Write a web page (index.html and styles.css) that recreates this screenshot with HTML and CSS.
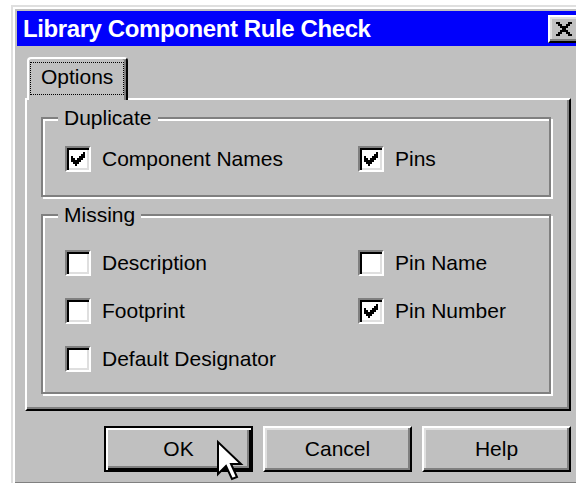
FILE: index.html
```html
<!DOCTYPE html>
<html lang="en">
<head>
<meta charset="utf-8">
<title>Library Component Rule Check</title>
<link rel="stylesheet" href="styles.css">
</head>
<body>
<div class="window">
  <div class="titlebar">
    <span class="title">Library Component Rule Check</span>
    <span class="close-btn" aria-label="Close">
      <svg width="16" height="14" viewBox="0 0 8 7" shape-rendering="crispEdges">
        <path d="M0 0h2v1h1v1h2v-1h1v-1h2v1h-1v1h-1v1h-1v1h1v1h1v1h1v1h-2v-1h-1v-1h-2v1h-1v1h-2v-1h1v-1h1v-1h1v-1h-1v-1h-1v-1h-1z" fill="#000"/>
      </svg>
    </span>
  </div>

  <div class="content">
    <div class="tabs">
      <div class="tab is-active"><span class="tab-focus">Options</span></div>
    </div>

    <div class="panel">
      <fieldset class="group">
        <legend>Duplicate</legend>
        <div class="options options-dup">
          <label class="check"><span class="box"><svg class="tick" viewBox="0 0 9 9" shape-rendering="crispEdges"><path d="M7 1h1v3h-1v1h-1v1h-1v1h-1v1h-1v-1h-1v-1h-1v-3h1v1h1v1h1v-1h1v-1h1v-1h1z"/></svg></span>Component Names</label>
          <label class="check"><span class="box"><svg class="tick" viewBox="0 0 9 9" shape-rendering="crispEdges"><path d="M7 1h1v3h-1v1h-1v1h-1v1h-1v1h-1v-1h-1v-1h-1v-3h1v1h1v1h1v-1h1v-1h1v-1h1z"/></svg></span>Pins</label>
        </div>
      </fieldset>

      <fieldset class="group">
        <legend>Missing</legend>
        <div class="options options-missing">
          <label class="check"><span class="box"></span>Description</label>
          <label class="check"><span class="box"></span>Pin Name</label>
          <label class="check"><span class="box"></span>Footprint</label>
          <label class="check"><span class="box"><svg class="tick" viewBox="0 0 9 9" shape-rendering="crispEdges"><path d="M7 1h1v3h-1v1h-1v1h-1v1h-1v1h-1v-1h-1v-1h-1v-3h1v1h1v1h1v-1h1v-1h1v-1h1z"/></svg></span>Pin Number</label>
          <label class="check"><span class="box"></span>Default Designator</label>
        </div>
      </fieldset>
    </div>

    <div class="buttons">
      <button type="button" class="btn btn-default">OK</button>
      <button type="button" class="btn">Cancel</button>
      <button type="button" class="btn">Help</button>
      <svg class="pointer" width="26" height="40" viewBox="0 0 26 40">
        <path d="M1 1V33L9 25L15 38L20 36L14 23H24Z" fill="#fff" stroke="#000" stroke-width="2" stroke-linejoin="miter"/>
      </svg>
    </div>
  </div>
</div>
</body>
</html>
```

FILE: styles.css
```css
html, body {
  margin: 0;
  padding: 0;
}

body {
  background: #fff;
  height: 483px;
  overflow: hidden;
  font-family: "Liberation Sans", Arial, sans-serif;
  font-size: 21px;
  color: #000;
}

/* dialog frame */
.window {
  margin: 5px 0 0 11px;
  width: 580px;
  box-sizing: border-box;
  background: #c0c0c0;
  border: 2px solid;
  border-color: #dfdfdf #000 #000 #dfdfdf;
  box-shadow: inset 2px 2px #fff, inset -2px -2px #808080;
  padding: 4px 4px 12px;
}

.titlebar {
  height: 35px;
  background: #0000fc;
  display: flex;
  align-items: center;
  justify-content: space-between;
  padding: 0 5px 0 6px;
}

.title {
  color: #fff;
  font-weight: bold;
  font-size: 24px;
  letter-spacing: -0.4px;
  line-height: 35px;
  white-space: nowrap;
}

.close-btn {
  width: 32px;
  height: 28px;
  box-sizing: border-box;
  background: #c0c0c0;
  border: 2px solid;
  border-color: #fff #000 #000 #fff;
  box-shadow: inset -2px -2px #808080, inset 2px 2px #dfdfdf;
  display: flex;
  align-items: center;
  justify-content: center;
}

.close-btn svg {
  display: block;
  margin: 0 0 0 -1px;
}

.content {
  padding: 11px 14px 0 8px;
}

/* tab strip */
.tabs {
  display: flex;
  padding-left: 2px;
}

.tab {
  position: relative;
  z-index: 1;
  margin-bottom: -2px;
  background: #c0c0c0;
  border: 2px solid #fff;
  border-bottom: 0;
  border-right-color: #000;
  border-radius: 4px 4px 0 0;
  box-shadow: inset -2px 0 #808080;
  padding: 3px 2px 5px 1px;
}

.tab-focus {
  display: block;
  border: 1px dotted #000;
  padding: 0 10px 4px;
  line-height: 27px;
}

.panel {
  border: 2px solid;
  border-color: #fff #000 #000 #fff;
  box-shadow: inset -2px -2px #808080;
  padding: 6px 18px 15px 14px;
}

/* etched group boxes */
.group {
  margin: 0;
  padding: 0;
  min-width: 0;
  border: 2px solid #808080;
  box-shadow: inset 2px 2px #fff, 2px 2px #fff;
}

.group + .group {
  margin-top: 6px;
}

.group legend {
  margin-left: 15px;
  padding: 0 6px;
  line-height: 24px;
  background: #c0c0c0;
}

.options {
  display: grid;
  grid-template-columns: 293px 1fr;
  padding-left: 22px;
}

.options-dup {
  margin-top: 16px;
  padding-bottom: 23px;
}

.options-missing {
  margin-top: 23px;
  row-gap: 22px;
  padding-bottom: 20px;
}

.check {
  display: flex;
  align-items: center;
  gap: 11px;
  line-height: 26px;
  white-space: nowrap;
}

.box {
  flex: none;
  width: 26px;
  height: 26px;
  box-sizing: border-box;
  background: #fff;
  border: 2px solid;
  border-color: #808080 #fff #fff #808080;
  box-shadow: inset 2px 2px #000, inset -2px -2px #dfdfdf;
  padding: 2px;
}

.tick {
  display: block;
  width: 18px;
  height: 18px;
  fill: #000;
}

/* command buttons */
.buttons {
  position: relative;
  display: flex;
  justify-content: flex-end;
  gap: 10px;
  margin-top: 15px;
}

.btn {
  width: 149px;
  height: 46px;
  box-sizing: border-box;
  margin: 0;
  padding: 0;
  background: #c0c0c0;
  border: 2px solid;
  border-color: #fff #000 #000 #fff;
  box-shadow: inset -2px -2px #808080, inset 2px 2px #dfdfdf;
  font: inherit;
  color: #000;
  line-height: 24px;
}

.btn-default {
  border-color: #000;
  box-shadow: inset 2px 2px #fff, inset -2px -2px #000, inset -4px -4px #808080;
}

.pointer {
  position: absolute;
  left: 192px;
  top: 15px;
  overflow: visible;
}
```
